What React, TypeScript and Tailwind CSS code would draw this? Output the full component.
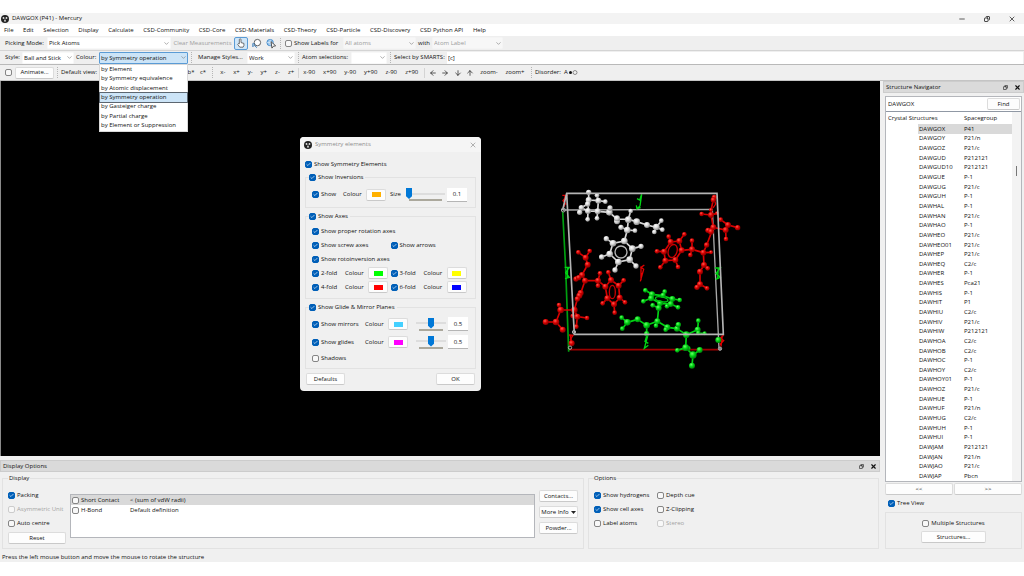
import React from "react";
import clsx from "clsx";
import {
  ArrowDown,
  ArrowLeft,
  ArrowRight,
  ArrowUp,
  Check as CheckIcon,
  ChevronDown,
  Copy,
  Minus,
  X,
} from "lucide-react";

type Atom = [number, number, number];

interface Molecule {
  id: string;
  light: string;
  base: string;
  dark: string;
  bonds: string;
  atoms: Atom[];
}

const menus = [
  "File",
  "Edit",
  "Selection",
  "Display",
  "Calculate",
  "CSD-Community",
  "CSD-Core",
  "CSD-Materials",
  "CSD-Theory",
  "CSD-Particle",
  "CSD-Discovery",
  "CSD Python API",
  "Help",
];

const colourModes = [
  "by Element",
  "by Symmetry equivalence",
  "by Atomic displacement",
  "by Symmetry operation",
  "by Gasteiger charge",
  "by Partial charge",
  "by Element or Suppression",
];

const structures: [string, string][] = [
  ["DAWGOX", "P41"],
  ["DAWGOY", "P21/n"],
  ["DAWGOZ", "P21/c"],
  ["DAWGUD", "P212121"],
  ["DAWGUD10", "P212121"],
  ["DAWGUE", "P-1"],
  ["DAWGUG", "P21/c"],
  ["DAWGUH", "P-1"],
  ["DAWHAL", "P-1"],
  ["DAWHAN", "P21/c"],
  ["DAWHAO", "P-1"],
  ["DAWHEO", "P21/c"],
  ["DAWHEO01", "P21/c"],
  ["DAWHEP", "P21/c"],
  ["DAWHEQ", "C2/c"],
  ["DAWHER", "P-1"],
  ["DAWHES", "Pca21"],
  ["DAWHIS", "P-1"],
  ["DAWHIT", "P1"],
  ["DAWHIU", "C2/c"],
  ["DAWHIV", "P21/c"],
  ["DAWHIW", "P212121"],
  ["DAWHOA", "C2/c"],
  ["DAWHOB", "C2/c"],
  ["DAWHOC", "P-1"],
  ["DAWHOY", "C2/c"],
  ["DAWHOY01", "P-1"],
  ["DAWHOZ", "P21/c"],
  ["DAWHUE", "P-1"],
  ["DAWHUF", "P21/n"],
  ["DAWHUG", "C2/c"],
  ["DAWHUH", "P-1"],
  ["DAWHUI", "P-1"],
  ["DAWJAM", "P212121"],
  ["DAWJAN", "P21/n"],
  ["DAWJAO", "P21/c"],
  ["DAWJAP", "Pbcn"],
];

const redUpperBonds =
  "M536 55 528 90 528 105 500 102M528 105 546 100M528 105 535 142 519 150M535 142 572 150 573 177M557 119 579 135 608 143M579 135 572 150M535 142 515 195 505 218 528 217M505 218 471 208 466 225M471 208 471 182M471 208 440 211 433 183 448 163M433 183 407 186 401 170M407 186 387 215 366 214M387 215 391 242 376 262M391 242 421 240 429 261M421 240 440 211M505 218 507 255 518 265M507 255 495 275 495 313 486 323M495 313 516 325";
const redLowerBonds =
  "M130 217 152 233 164 213M152 233 158 254 141 285 125 296M141 285 150 302 189 302 195 280M189 302 189 317M189 302 211 320 228 300 220 277M228 300 251 317 266 301M251 317 254 353 270 367M254 353 237 373 239 398M237 373 217 355 203 370M217 355 211 320M150 302 137 340 127 357 118 390 77 390 72 375M77 390 63 426 32 426M63 426 83 449M118 390 127 410 156 414M127 410 124 440M118 390 113 408M106 465 110 490";

const molecules: Molecule[] = [
  {
    id: "red",
    light: "#ff5a50",
    base: "#d80000",
    dark: "#6e0000",
    bonds: redUpperBonds + redLowerBonds,
    atoms: [
      [538, 52, 8], [535, 60, 8], [528, 90, 6], [528, 105, 9], [500, 102, 7],
      [546, 100, 6], [535, 142, 9], [519, 151, 8], [528, 155, 9], [557, 119, 7],
      [579, 135, 9], [572, 150, 9], [608, 143, 8], [573, 177, 7], [515, 195, 8],
      [505, 218, 9], [528, 217, 6], [471, 208, 9], [466, 225, 7], [471, 182, 7],
      [440, 211, 9], [433, 183, 9], [448, 163, 7], [407, 186, 9], [401, 170, 7],
      [387, 215, 9], [366, 214, 7], [391, 242, 9], [376, 262, 7], [421, 240, 9],
      [429, 261, 7], [507, 255, 9], [518, 265, 7], [495, 275, 9], [495, 313, 9],
      [486, 322, 8], [516, 325, 7],
      [130, 217, 7], [164, 213, 7], [152, 233, 9], [158, 254, 9], [141, 285, 9],
      [123, 297, 8], [131, 293, 8], [150, 302, 9], [189, 302, 9], [195, 280, 7],
      [220, 277, 7], [189, 317, 7], [228, 300, 9], [266, 301, 7], [211, 320, 9],
      [251, 317, 9], [217, 355, 9], [203, 370, 7], [254, 353, 9], [270, 367, 7],
      [237, 373, 9], [239, 398, 7], [137, 339, 9], [133, 347, 9], [127, 357, 8],
      [118, 390, 10], [77, 390, 10], [72, 375, 7], [63, 426, 10], [32, 426, 9],
      [83, 449, 9], [127, 410, 9], [113, 408, 7], [156, 414, 7], [124, 440, 7],
      [110, 490, 9],
    ],
  },
  {
    id: "white",
    light: "#ffffff",
    base: "#d8d8d8",
    dark: "#777777",
    bonds:
      "M161 37 161 60 190 62 186 46M190 62 211 65M161 60 158 72 139 83 134 97M139 83 159 93 158 118M159 93 188 94 186 115M190 62 188 94 223 97 225 84M161 60 159 93M223 97 246 117 246 126M246 117 280 118 287 93M280 118 305 125 336 135 364 142 379 122M364 142 381 149M364 142 358 156M280 118 277 150 258 142M277 150 300 152M277 150 268 183 234 190 214 176M234 190 224 222 200 231M224 222 250 246 240 270M250 246 284 239 303 258M284 239 292 206 318 199M292 206 268 183",
    atoms: [
      [161, 37, 8], [161, 60, 9], [186, 46, 7], [190, 62, 9], [211, 65, 7],
      [158, 72, 8], [139, 83, 8], [134, 97, 8], [159, 93, 9], [188, 94, 9],
      [158, 118, 7], [186, 115, 7], [223, 97, 10], [225, 84, 8], [246, 124, 9],
      [246, 115, 9], [280, 119, 10], [287, 93, 7], [305, 125, 10], [336, 135, 9],
      [364, 141, 10], [379, 122, 7], [382, 149, 7], [358, 156, 7], [258, 142, 8],
      [300, 152, 7], [277, 150, 10], [268, 183, 10], [214, 176, 8], [234, 190, 10],
      [292, 206, 10], [318, 199, 8], [224, 222, 10], [200, 231, 8], [284, 239, 10],
      [250, 246, 10], [303, 258, 8], [240, 270, 8],
    ],
  },
  {
    id: "green",
    light: "#6bff6b",
    base: "#00d414",
    dark: "#006b0a",
    bonds:
      "M331 331 351 343 348 355 325 364M351 343 384 347 389 335M384 347 412 357 434 360M412 357 407 372 429 382M407 372 375 370 348 355M407 372 396 379M371 384 353 376M375 370 371 384 367 424 363 437M367 424 335 436 308 418 277 427 260 413M277 427 262 446M335 436 335 461M367 424 397 442 426 446 430 434M397 442 392 449M426 446 454 464 488 449 490 422M488 449 490 459 509 460M454 464 452 503 427 511M452 503 474 525 494 510M474 525 471 557",
    atoms: [
      [331, 331, 7], [351, 343, 9], [325, 364, 7], [348, 355, 9], [353, 376, 7],
      [389, 335, 7], [384, 346, 8], [412, 357, 9], [434, 360, 7], [429, 382, 7],
      [396, 379, 7], [407, 372, 9], [375, 370, 9], [371, 384, 9], [367, 424, 9],
      [363, 437, 7], [335, 436, 10], [308, 418, 9], [277, 427, 10], [260, 413, 7],
      [262, 446, 7], [397, 442, 9], [392, 449, 7], [426, 446, 9], [430, 434, 8],
      [454, 464, 10], [488, 449, 9], [490, 422, 7], [490, 459, 7], [509, 460, 6],
      [460, 505, 7], [452, 503, 10], [427, 511, 7], [474, 525, 11], [494, 510, 9],
      [471, 557, 9], [550, 480, 9], [335, 461, 8],
    ],
  },
];

const Structure = () => (
  <svg
    viewBox="0 0 630 570"
    className="absolute left-[534px] top-[99px] h-[190px] w-[210px]"
    fill="none"
  >
    <defs>
      {molecules.map((m) => (
        <radialGradient key={m.id} id={m.id} cx="0.38" cy="0.32" r="0.75">
          <stop offset="0" stopColor={m.light} />
          <stop offset="0.45" stopColor={m.base} />
          <stop offset="1" stopColor={m.dark} />
        </radialGradient>
      ))}
    </defs>
    <path d="M83 90 532 88 552 505" stroke="#a8a8a8" strokeWidth="4" />
    <path d="M101 509H551" stroke="#9c0000" strokeWidth="5" />
    <path d="M83 94 92 265 101 515" stroke="#00a010" strokeWidth="5" />

    {/* screw axis markers */}
    <g stroke="#00d414" strokeWidth="4">
      <path d="M320 43 314 60 306 56M320 43 315 78 306 86 304 76M306 86 317 83" />
      <path d="M89 262 103 262 92 278 103 292 90 296M98 262 97 292" />
      <path d="M540 264 556 264 543 280 556 292 542 298M550 262 548 294" />
      <path d="M336 465 330 484 340 490M338 468 328 505 340 496" />
    </g>
    <g stroke="#e00000" strokeWidth="4">
      <path d="M82 46 96 46 84 62 94 74M90 46 88 80" />
      <path d="M102 465 114 466 106 478 112 490" />
      <path d="M328 255 318 262 318 300M316 260 326 268 316 304M318 282 324 280" />
      <path d="M566 466 556 474 566 482 554 494M562 466 558 500" />
      <path d="M538 60 542 72 534 84" />
    </g>

    {molecules.map((m) => (
      <g key={m.id}>
        <path d={m.bonds} stroke={m.base} strokeWidth="5" strokeLinejoin="round" />
        {m.atoms.map(([x, y, r], i) => (
          <circle key={i} cx={x} cy={y} r={r} fill={`url(#${m.id})`} />
        ))}
      </g>
    ))}
    <circle cx="258" cy="216" r="18" stroke="#b5b5b5" strokeWidth="4" />
    <ellipse cx="413" cy="213" rx="13" ry="20" stroke="#c80000" strokeWidth="4" transform="rotate(18 413 213)" />
    <ellipse cx="232" cy="336" rx="9" ry="20" stroke="#c80000" strokeWidth="4" />
    <ellipse cx="380" cy="358" rx="19" ry="7" stroke="#00c412" strokeWidth="4" transform="rotate(10 380 358)" />

    <path d="M83 90 95 40H546L565 463H118L95 40" stroke="#b4b4b4" strokeWidth="5" />
    <g stroke="#aaaaaa" strokeWidth="3">
      <circle cx="85" cy="90" r="6" />
      <circle cx="105" cy="503" r="5" />
      <circle cx="117" cy="456" r="5" />
      <circle cx="555" cy="506" r="5" fill="#888888" />
    </g>
  </svg>
);

const Logo = () => (
  <svg viewBox="0 0 16 16" className="size-[8px] shrink-0">
    <circle cx="8" cy="8" r="8" fill="#222222" />
    <circle cx="5" cy="6" r="1.8" fill="#e8e8e8" />
    <circle cx="11" cy="6" r="1.8" fill="#e8e8e8" />
    <circle cx="8" cy="11.5" r="1.8" fill="#e8e8e8" />
    <path d="M5 6 8 9 11 6M8 9v3" stroke="#999999" fill="none" />
  </svg>
);

interface CheckProps {
  label?: string;
  checked?: boolean;
  disabled?: boolean;
  className?: string;
}

const Check: React.FC<CheckProps> = ({ label, checked, disabled, className }) => (
  <label
    className={clsx(
      "flex items-center gap-[2px] whitespace-nowrap",
      disabled && "text-[#a3a3a3]",
      className
    )}
  >
    <span className="grid size-[7px] shrink-0 place-items-center">
      <input
        type="checkbox"
        aria-label={label || "Animate"}
        defaultChecked={checked}
        disabled={disabled}
        className="col-start-1 row-start-1 size-[7px] appearance-none rounded-[2px] border border-[#858585] bg-[#f8f8f8] checked:border-[#005fb8] checked:bg-[#005fb8] disabled:border-[#cccccc]"
      />
      {checked && (
        <CheckIcon
          className="pointer-events-none col-start-1 row-start-1 size-[5px] text-white"
          strokeWidth={3}
        />
      )}
    </span>
    {label}
  </label>
);

interface DropProps {
  label: string;
  value?: string;
  options?: string[];
  disabled?: boolean;
  active?: boolean;
  className?: string;
}

const Drop: React.FC<DropProps> = ({ label, value = "", options, disabled, active, className }) => (
  <span className={clsx("grid shrink-0 items-center", className)}>
    <select
      aria-label={label}
      defaultValue={value}
      disabled={disabled}
      className={clsx(
        "col-start-1 row-start-1 h-[12px] w-full appearance-none rounded-[1px] border pl-[1px] leading-[10px] opacity-100",
        active && "border-[#5a9bd5] bg-[#cce4f7]",
        disabled && "border-[#f4f4f4] bg-[#f7f7f7] text-[#9b9b9b]",
        !active && !disabled && "border-[#f8f8f8] bg-[#ffffff]"
      )}
    >
      {(options || [value]).map((o) => (
        <option key={o}>{o}</option>
      ))}
    </select>
    <ChevronDown className="pointer-events-none col-start-1 row-start-1 mr-[1px] size-[7px] justify-self-end text-[#777777]" />
  </span>
);

interface ButtonProps {
  children: React.ReactNode;
  className?: string;
  label?: string;
}

const Button: React.FC<ButtonProps> = ({ children, className, label }) => (
  <button
    aria-label={label}
    className={clsx(
      "flex h-[12px] shrink-0 items-center justify-center whitespace-nowrap rounded-[2px] border border-[#dcdcdc] border-b-[#c9c9c9] bg-[#fdfdfd]",
      className
    )}
  >
    {children}
  </button>
);

const Swatch = ({ name, colour }: { name: string; colour: string }) => (
  <Button className="w-[20px]" label={`${name} colour`}>
    <span className={clsx("h-[5px] w-[9px]", colour)} />
  </Button>
);

const Handle = () => (
  <span className="mx-[3px] h-[11px] shrink-0 border-l border-dotted border-[#b5b5b5]" />
);

const Range = ({ name, value, className }: { name: string; value: number; className: string }) => (
  <span className={clsx("flex flex-col", className)}>
    <input
      type="range"
      aria-label={name}
      min={0}
      max={1}
      step={0.1}
      defaultValue={value}
      className="h-[11px] w-full appearance-none bg-[linear-gradient(#dddddd,#dddddd)] bg-[length:100%_2px] bg-center bg-no-repeat [&::-webkit-slider-thumb]:h-[11px] [&::-webkit-slider-thumb]:w-[6px] [&::-webkit-slider-thumb]:appearance-none [&::-webkit-slider-thumb]:bg-[#0078d7] [&::-webkit-slider-thumb]:[clip-path:polygon(0_0,100%_0,100%_75%,50%_100%,0_75%)]"
    />
    <span className="mx-[3px] h-[2px] bg-[#aba89c]" />
  </span>
);

const NumberBox = ({ name, value }: { name: string; value: string }) => (
  <input
    aria-label={name}
    defaultValue={value}
    className="h-[14px] w-[20px] border-b border-[#b5b5b5] bg-white text-center"
  />
);

const SymmetryDialog = () => (
  <section
    role="dialog"
    aria-label="Symmetry elements"
    className="absolute left-[299px] top-[56px] w-[181px] rounded-[4px] bg-[#f0f0f0] pb-[6px]"
  >
    <header className="flex h-[15px] items-center gap-[3px] rounded-t-[4px] bg-[#f5f5f5] px-[4px] text-[#8d8d8d]">
      <Logo />
      <span className="flex-1">Symmetry elements</span>
      <button aria-label="Close dialog">
        <X className="size-[8px]" />
      </button>
    </header>
    <div className="px-[5px] pt-[7px]">
      <Check label="Show Symmetry Elements" checked className="h-[10px]" />
      <fieldset className="mt-[3px] border border-[#e2e2e2] px-[6px] pb-[5px]">
        <legend className="-ml-[3px]">
          <Check label="Show Inversions" checked className="h-[10px] pr-[2px]" />
        </legend>
        <div className="flex h-[20px] items-center pt-[5px]">
          <Check label="Show" checked className="w-[31px]" />
          <span className="w-[23px]">Colour</span>
          <Swatch name="Inversion" colour="bg-[#ffb000]" />
          <span className="ml-[4px] w-[16px]">Size</span>
          <Range name="Inversion size" value={0} className="mr-[2px] w-[39px]" />
          <NumberBox name="Inversion size value" value="0.1" />
        </div>
      </fieldset>
      <fieldset className="mt-[3px] border border-[#e2e2e2] px-[6px] pb-[4px]">
        <legend className="-ml-[3px]">
          <Check label="Show Axes" checked className="h-[10px] pr-[2px]" />
        </legend>
        <div className="grid grid-cols-2 items-center pt-[3px] [grid-auto-rows:14px]">
          <Check label="Show proper rotation axes" checked className="col-span-2" />
          <Check label="Show screw axes" checked />
          <Check label="Show arrows" checked />
          <Check label="Show rotoinversion axes" checked className="col-span-2" />
          <div className="flex items-center">
            <Check label="2-fold" checked className="w-[33px]" />
            <span className="w-[23px]">Colour</span>
            <Swatch name="2-fold" colour="bg-[#00ff00]" />
          </div>
          <div className="flex items-center">
            <Check label="3-fold" checked className="w-[33px]" />
            <span className="w-[23px]">Colour</span>
            <Swatch name="3-fold" colour="bg-[#ffff00]" />
          </div>
          <div className="flex items-center">
            <Check label="4-fold" checked className="w-[33px]" />
            <span className="w-[23px]">Colour</span>
            <Swatch name="4-fold" colour="bg-[#ff0000]" />
          </div>
          <div className="flex items-center">
            <Check label="6-fold" checked className="w-[33px]" />
            <span className="w-[23px]">Colour</span>
            <Swatch name="6-fold" colour="bg-[#0000ff]" />
          </div>
        </div>
      </fieldset>
      <fieldset className="mt-[3px] border border-[#e2e2e2] px-[6px] pb-[3px]">
        <legend className="-ml-[3px]">
          <Check label="Show Glide & Mirror Planes" checked className="h-[10px] pr-[2px]" />
        </legend>
        <div className="mt-px flex h-[18px] items-center pt-[4px]">
          <Check label="Show mirrors" checked className="w-[53px]" />
          <span className="w-[23px]">Colour</span>
          <Swatch name="Mirror" colour="bg-[#44d0ff]" />
          <Range name="Mirror size" value={0.5} className="ml-[8px] mr-[2px] w-[30px]" />
          <NumberBox name="Mirror size value" value="0.5" />
        </div>
        <div className="flex h-[18px] items-center pt-[4px]">
          <Check label="Show glides" checked className="w-[53px]" />
          <span className="w-[23px]">Colour</span>
          <Swatch name="Glide" colour="bg-[#ff00ff]" />
          <Range name="Glide size" value={0.5} className="ml-[8px] mr-[2px] w-[30px]" />
          <NumberBox name="Glide size value" value="0.5" />
        </div>
        <Check label="Shadows" className="mt-[2px] h-[14px]" />
      </fieldset>
      <div className="flex justify-between px-[1px] pt-[4px]">
        <Button className="w-[39px]">Defaults</Button>
        <Button className="w-[39px]">OK</Button>
      </div>
    </div>
  </section>
);

const Toolbars = () => (
  <div className="bg-[#efefef]">
    <div className="flex h-[15px] items-center border-b border-[#d4d4d4]">
      <span className="w-[47px] pl-[5px]">Picking Mode:</span>
      <Drop label="Picking mode" value="Pick Atoms" className="w-[124px]" />
      <button className="w-[63px] text-center text-[#a0a0a0]" disabled>
        Clear Measurements
      </button>
      <button
        aria-label="Pick"
        className="flex h-[13px] w-[14px] items-center justify-center rounded-[2px] border border-[#5a9bd5] bg-[#cfe6f8]"
      >
        <svg viewBox="0 0 24 24" className="size-[10px]" fill="white" stroke="#555555" strokeWidth="2">
          <path d="M8 14V4a2 2 0 0 1 4 0v7l7 2v5l-2 4H9l-5-7 2-2z" />
        </svg>
      </button>
      <button aria-label="Lasso select" className="ml-[3px]">
        <svg viewBox="0 0 24 24" className="size-[11px]" fill="none" stroke="#555555" strokeWidth="2">
          <circle cx="14" cy="10" r="7" fill="white" />
          <path d="M9 14 4 12v7l3-3 6 5" stroke="#2f74b5" />
        </svg>
      </button>
      <button aria-label="Select fragment" className="ml-[4px]">
        <svg viewBox="0 0 24 24" className="size-[11px]" fill="none" strokeWidth="2">
          <circle cx="9" cy="10" r="7" fill="#9cc8ee" stroke="#3f88c8" />
          <path d="M2 10h14M9 3v14" stroke="#ffffff" strokeWidth="1" />
          <path d="m11 8 10 9-5 1-3 4z" fill="white" stroke="#444444" />
        </svg>
      </button>
      <Handle />
      <Check label="Show Labels for" className="ml-[1px] w-[58px]" />
      <Drop label="Label atoms" value="All atoms" disabled className="w-[73px]" />
      <span className="w-[16px] text-center">with</span>
      <Drop label="Label content" value="Atom Label" disabled className="w-[71px]" />
    </div>
    <div className="flex h-[14px] items-center border-b border-[#b9b9b9]">
      <span className="w-[22px] pl-[5px]">Style:</span>
      <Drop label="Style" value="Ball and Stick" className="w-[52px]" />
      <span className="w-[25px] pl-[2px]">Colour:</span>
      <div className="relative w-[89px]">
        <Drop
          label="Colour"
          value="by Symmetry operation"
          options={colourModes}
          active
          className="w-full"
        />
        <ul
          role="listbox"
          aria-label="Colour modes"
          className="absolute left-0 top-full z-20 grid h-[68px] w-full auto-rows-fr border border-[#d9d9d9] bg-white"
        >
          {colourModes.map((mode) => (
            <li
              key={mode}
              role="option"
              aria-selected={mode === "by Symmetry operation"}
              className={clsx(
                "flex items-center whitespace-nowrap pl-[1px]",
                mode === "by Symmetry operation" && "bg-[#cce4f7] outline outline-[#5c6670]"
              )}
            >
              {mode}
            </li>
          ))}
        </ul>
      </div>
      <Handle />
      <button className="w-[52px] pl-[3px] text-left">Manage Styles...</button>
      <Drop label="Style preset" value="Work" className="w-[48px]" />
      <Handle />
      <span className="w-[49px]">Atom selections:</span>
      <Drop label="Atom selections" className="w-[36px]" />
      <Handle />
      <label htmlFor="smarts" className="w-[53px]">
        Select by SMARTS:
      </label>
      <input
        id="smarts"
        defaultValue="[c]"
        className="mr-px h-[12px] min-w-0 flex-1 bg-white pl-[1px]"
      />
    </div>
    <div className="flex h-[16px] items-center border-b border-[#c4c4c4]">
      <Check className="ml-[5px]" />
      <Button className="ml-[3px] w-[39px]">Animate...</Button>
      <Handle />
      <span className="w-[124px]">Default view:</span>
      <button className="w-[12px]">b*</button>
      <button className="w-[12px]">c*</button>
      <Handle />
      <div className="grid w-[82px] grid-cols-6">
        {["x-", "x+", "y-", "y+", "z-", "z+"].map((t) => (
          <button key={t}>{t}</button>
        ))}
      </div>
      <span className="h-[10px] border-l border-[#d4d4d4]" />
      <div className="grid w-[123px] grid-cols-6">
        {["x-90", "x+90", "y-90", "y+90", "z-90", "z+90"].map((t) => (
          <button key={t}>{t}</button>
        ))}
      </div>
      <span className="ml-[2px] h-[10px] border-l border-[#d4d4d4]" />
      <div className="ml-[2px] grid w-[49px] grid-cols-4 place-items-center">
        <button aria-label="Left"><ArrowLeft className="size-[8px]" /></button>
        <button aria-label="Right"><ArrowRight className="size-[8px]" /></button>
        <button aria-label="Down"><ArrowDown className="size-[8px]" /></button>
        <button aria-label="Up"><ArrowUp className="size-[8px]" /></button>
      </div>
      <button className="w-[26px]">zoom-</button>
      <button className="w-[26px]">zoom+</button>
      <Handle />
      <span className="w-[29px]">Disorder:</span>
      <button className="flex items-center">
        A
        <svg viewBox="0 0 20 10" className="h-[5px] w-[10px]">
          <circle cx="5" cy="5" r="3" fill="#111111" />
          <circle cx="14" cy="5" r="4" fill="none" stroke="#333333" />
        </svg>
      </button>
    </div>
  </div>
);

const DockTitle = ({ title }: { title: string }) => (
  <header className="flex h-[12px] items-center gap-[6px] border border-[#cccccc] bg-[#dadada] px-[2px]">
    <h2 className="flex-1">{title}</h2>
    <button aria-label={`Float ${title}`}>
      <Copy className="size-[5px] -scale-x-100" strokeWidth={3} />
    </button>
    <button aria-label={`Close ${title}`}>
      <X className="size-[7px]" strokeWidth={4} />
    </button>
  </header>
);

const DisplayOptions = () => (
  <section>
    <DockTitle title="Display Options" />
    <div className="grid grid-cols-[2fr_1fr] gap-[4px] pl-[2px] pr-px pt-px">
      <fieldset className="h-[76px] min-w-0 border border-[#e2e2e2] px-[5px]">
        <legend className="h-[10px] px-[1px] leading-[10px]">Display</legend>
        <div className="flex gap-[4px]">
          <div className="flex w-[58px] flex-col pt-[5px]">
            <Check label="Packing" checked className="h-[14px]" />
            <Check label="Asymmetric Unit" disabled className="h-[14px]" />
            <Check label="Auto centre" className="h-[14px]" />
            <Button className="mt-[2px] w-[58px]">Reset</Button>
          </div>
          <div className="mt-[11px] h-[44px] flex-1 border border-[#b4b6bb] bg-white">
            <table className="w-full border-collapse text-left">
              <tbody>
                <tr className="h-[10px] bg-[#d9d9d9]">
                  <td className="w-[59px] p-0 pl-[1px]"><Check label="Short Contact" /></td>
                  <td className="p-0">&lt; (sum of vdW radii)</td>
                </tr>
                <tr className="h-[10px]">
                  <td className="p-0 pl-[1px]"><Check label="H-Bond" /></td>
                  <td className="p-0">Default definition</td>
                </tr>
              </tbody>
            </table>
          </div>
          <div className="flex w-[39px] flex-col gap-[4px] pt-[7px]">
            <Button>Contacts...</Button>
            <Button>
              More Info
              <svg viewBox="0 0 10 6" className="ml-[2px] h-[3px] w-[5px]">
                <path d="M0 0h10L5 6z" fill="#222222" />
              </svg>
            </Button>
            <Button>Powder...</Button>
          </div>
        </div>
      </fieldset>
      <fieldset className="h-[76px] min-w-0 border border-[#e2e2e2] px-[5px]">
        <legend className="h-[10px] leading-[10px]">Options</legend>
        <div className="grid w-[130px] grid-cols-[63px_1fr] pt-[5px] [grid-auto-rows:14px]">
          <Check label="Show hydrogens" checked />
          <Check label="Depth cue" />
          <Check label="Show cell axes" checked />
          <Check label="Z-Clipping" />
          <Check label="Label atoms" />
          <Check label="Stereo" disabled />
        </div>
      </fieldset>
    </div>
  </section>
);

const StructureNavigator = () => (
  <aside className="ml-[3px] w-[141px] shrink-0">
    <DockTitle title="Structure Navigator" />
    <div className="px-[2px] pt-[3px]">
      <div className="border border-[#b4b6bb] bg-white">
        <div className="flex h-[15px] items-center border-b border-[#9098a4] pr-px">
          <input
            aria-label="Refcode"
            defaultValue="DAWGOX"
            className="min-w-0 flex-1 pl-[2px]"
          />
          <Button className="w-[33px]">Find</Button>
        </div>
        <div className="flex">
          <table className="h-[369px] flex-1 border-collapse text-left">
            <thead>
              <tr className="h-[12px]">
                <th colSpan={2} className="p-0 pl-[2px] font-normal">Crystal Structures</th>
                <th className="p-0 font-normal">Spacegroup</th>
              </tr>
            </thead>
            <tbody>
              {structures.map(([code, group], i) => (
                <tr key={code}>
                  <td className="w-[32px] p-0" />
                  <td className={clsx("w-[46px] p-0 pl-[1px] leading-[8px]", i === 0 && "bg-[#d9d9d9]")}>{code}</td>
                  <td className={clsx("p-0 leading-[8px]", i === 0 && "bg-[#d9d9d9]")}>{group}</td>
                </tr>
              ))}
            </tbody>
          </table>
          <div className="w-[9px] bg-[#f3f3f3] pt-[54px]">
            <div className="mx-auto h-[10px] w-px bg-[#777777]" />
          </div>
        </div>
      </div>
      <div className="grid grid-cols-2 gap-[1px] pt-[1px]">
        <Button>&lt;&lt;</Button>
        <Button>&gt;&gt;</Button>
      </div>
      <Check label="Tree View" checked className="ml-[3px] mt-[3px] h-[10px]" />
      <div className="mt-[4px] flex h-[37px] flex-col items-center justify-center gap-[3px] border border-[#e2e2e2]">
        <Check label="Multiple Structures" className="h-[10px]" />
        <Button className="w-[65px]">Structures...</Button>
      </div>
    </div>
  </aside>
);

const App: React.FC = () => (
  <div className="min-h-screen bg-white pt-[13px] font-['Open_Sans',sans-serif] text-[6px] leading-[9px] text-[#111111]">
    <header className="flex h-[11px] items-center gap-[3px] bg-[#f3f3f3] pl-px">
      <Logo />
      <h1 className="flex-1">DAWGOX (P41) - Mercury</h1>
      <div className="flex w-[66px] items-center justify-between pr-[8px]">
        <button aria-label="Minimise"><Minus className="size-[8px]" /></button>
        <button aria-label="Restore"><Copy className="size-[6px] -scale-x-100" strokeWidth={3} /></button>
        <button aria-label="Close"><X className="size-[8px]" /></button>
      </div>
    </header>
    <nav className="flex h-[12px] w-[486px] items-center justify-between pl-[4px]">
      {menus.map((menu) => (
        <button key={menu} className="whitespace-nowrap">
          {menu}
        </button>
      ))}
    </nav>
    <Toolbars />
    <div className="bg-[#f0f0f0]">
      <div className="flex">
        <main className="flex min-w-0 flex-1 flex-col">
          <div className="relative mb-[4px] flex-1 border-l border-[#8a8a8a] bg-black">
            <Structure />
            <SymmetryDialog />
          </div>
          <DisplayOptions />
        </main>
        <StructureNavigator />
      </div>
      <footer className="h-[13px] pl-[2px] pt-[4px]">
        Press the left mouse button and move the mouse to rotate the structure
      </footer>
    </div>
  </div>
);

export default App;
